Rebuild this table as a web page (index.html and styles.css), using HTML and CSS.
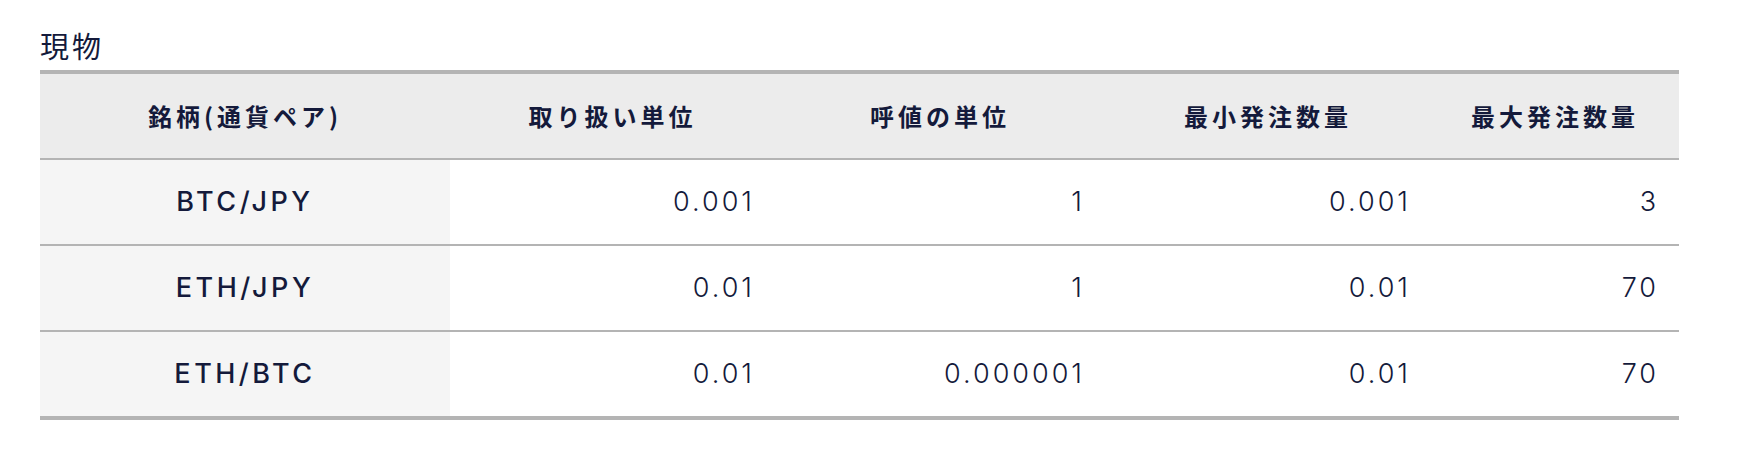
FILE: index.html
```html
<!DOCTYPE html>
<html lang="ja">
<head>
<meta charset="utf-8">
<title>現物</title>
<link rel="stylesheet" href="styles.css">
</head>
<body>
<main class="page">
  <h2 class="title">現物</h2>
  <table class="spec">
    <colgroup>
      <col class="c1"><col class="c2"><col class="c3"><col class="c4"><col class="c5">
    </colgroup>
    <thead>
      <tr>
        <th>銘柄(通貨ペア)</th>
        <th>取り扱い単位</th>
        <th>呼値の単位</th>
        <th>最小発注数量</th>
        <th>最大発注数量</th>
      </tr>
    </thead>
    <tbody>
      <tr>
        <td class="pair">BTC/JPY</td>
        <td class="num">0.001</td>
        <td class="num">1</td>
        <td class="num">0.001</td>
        <td class="num">3</td>
      </tr>
      <tr>
        <td class="pair">ETH/JPY</td>
        <td class="num">0.01</td>
        <td class="num">1</td>
        <td class="num">0.01</td>
        <td class="num">70</td>
      </tr>
      <tr>
        <td class="pair">ETH/BTC</td>
        <td class="num">0.01</td>
        <td class="num">0.000001</td>
        <td class="num">0.01</td>
        <td class="num">70</td>
      </tr>
    </tbody>
  </table>
</main>
</body>
</html>
```

FILE: styles.css
```css
html, body {
  margin: 0;
  padding: 0;
  background: #ffffff;
}

.page {
  padding: 27px 0 0 40px;
  color: #141a3b;
  font-family: "Noto Sans CJK JP", "Noto Sans", sans-serif;
}

.title {
  margin: 0 0 7px 0;
  font-size: 29px;
  line-height: 36px;
  font-weight: 400;
  letter-spacing: 3px;
  color: #141a3b;
}

.spec {
  width: 1639px;
  table-layout: fixed;
  border-collapse: separate;
  border-spacing: 0;
}

.c1 { width: 410px; }
.c2 { width: 325px; }
.c3 { width: 330px; }
.c4 { width: 326px; }
.c5 { width: 248px; }

.spec th {
  background: #ececec;
  border-top: 4px solid #b4b4b4;
  border-bottom: 2px solid #b4b4b4;
  padding: 25px 0;
  height: 34px;
  line-height: 34px;
  font-size: 24px;
  font-weight: 700;
  letter-spacing: 4px;
  text-align: center;
  font-family: "Noto Sans CJK JP", sans-serif;
}

.spec td {
  border-bottom: 2px solid #b4b4b4;
  padding: 25px 0;
  height: 34px;
  line-height: 34px;
}

.spec tbody tr:last-child td {
  border-bottom-width: 4px;
}

.pair {
  background: #f5f5f5;
  text-align: center;
  font-family: "Inter", "Noto Sans", sans-serif;
  font-size: 27px;
  font-weight: 500;
  letter-spacing: 3.5px;
}

.num {
  text-align: right;
  padding-right: 20px !important;
  font-family: "Inter", "Noto Sans", sans-serif;
  font-size: 27px;
  font-weight: 300;
  letter-spacing: 3px;
}
```
